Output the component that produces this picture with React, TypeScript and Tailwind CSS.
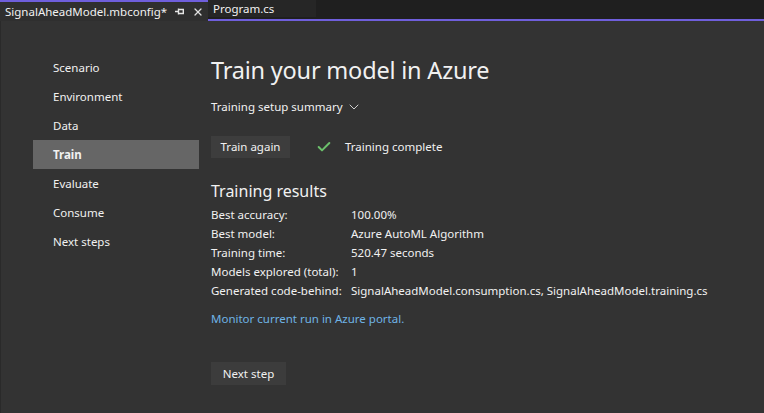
import { Check, ChevronDown, X } from 'lucide-react';

const steps = ['Scenario', 'Environment', 'Data', 'Train', 'Evaluate', 'Consume', 'Next steps'];

const results: [string, string][] = [
    ['Best accuracy:', '100.00%'],
    ['Best model:', 'Azure AutoML Algorithm'],
    ['Training time:', '520.47 seconds'],
    ['Models explored (total):', '1'],
    ['Generated code-behind:', 'SignalAheadModel.consumption.cs, SignalAheadModel.training.cs'],
];

export default function App() {
    return (
        <div className="w-[764px] h-[413px] bg-[#333333] text-[#f1f1f1] flex flex-col overflow-hidden" style={{ fontFamily: '"Noto Sans", "Open Sans", sans-serif' }}>
            {/* Tab strip */}
            <div className="h-[21px] bg-[#1f1f1f] flex shrink-0">
                <div className="w-[208px] h-[21px] bg-[#2f2f2f] border-t-2 border-[#6f5fdc] flex items-center pl-[5px] text-[11.5px] leading-none">
                    <span>SignalAheadModel.mbconfig*</span>
                    <svg className="ml-[8px]" width="9" height="9" viewBox="0 0 9 9" fill="none" stroke="#e6e6e6" strokeWidth="1.4">
                        <path d="M0 4.5H3M3.5 1.5V7.5M3.5 2.5H8.3V6.5H3.5" />
                    </svg>
                    <X className="w-[12px] h-[12px] ml-[8px] text-[#e0e0e0]" strokeWidth={2.5} />
                </div>
                <div className="flex-1 flex flex-col">
                    <div className="h-[19px] flex">
                        <div className="w-[108px] h-[17px] bg-[#262626] pl-[5px] text-[11.5px] leading-[17px]">Program.cs</div>
                    </div>
                    <div className="h-[2px] bg-[#6f5fdc]" />
                </div>
            </div>

            <div className="flex flex-1 border-l border-[#2a2a2a]">
                {/* Steps nav */}
                <div className="w-[177px] pl-[32px] pt-[32px] flex flex-col shrink-0">
                    {steps.map((s) => (
                        <div
                            key={s}
                            className={
                                s === 'Train'
                                    ? 'h-[29px] w-[166px] bg-[#666666] pl-[20px] flex items-center text-[11.5px] font-bold'
                                    : 'h-[29px] w-[166px] pl-[20px] flex items-center text-[11.5px]'
                            }
                        >
                            {s}
                        </div>
                    ))}
                </div>

                {/* Main content */}
                <div className="pl-[33px] pt-[33px] flex flex-col items-start">
                    <h1 className="text-[23.5px] leading-[32px] font-normal tracking-[-0.2px]">Train your model in Azure</h1>
                    <div className="mt-[13px] flex items-center text-[11.5px] leading-[16px]">
                        Training setup summary
                        <ChevronDown className="w-[16px] h-[16px] ml-[3px] text-[#cfcfcf]" strokeWidth={1.5} />
                    </div>
                    <div className="mt-[21px] flex items-center">
                        <button className="h-[22px] w-[79px] bg-[#3d3d3d] text-[11.5px] leading-none">Train again</button>
                        <Check className="w-[16px] h-[16px] ml-[26px] text-[#6cc16c]" strokeWidth={3} />
                        <span className="ml-[13px] text-[11.5px]">Training complete</span>
                    </div>
                    <h2 className="mt-[21px] text-[16px] leading-[24px] font-normal">Training results</h2>
                    <div className="mt-[2px] flex flex-col text-[11.5px]">
                        {results.map(([k, v]) => (
                            <div key={k} className="h-[19px] flex items-center">
                                <span className="w-[140px]">{k}</span>
                                <span>{v}</span>
                            </div>
                        ))}
                    </div>
                    <div className="mt-[11px] text-[11.5px] leading-[16px] text-[#6fb3e6]">Monitor current run in Azure portal.</div>
                    <button className="mt-[35px] h-[23px] w-[75px] bg-[#3c3c3c] text-[11.5px] leading-none">Next step</button>
                </div>
            </div>
        </div>
    );
}
